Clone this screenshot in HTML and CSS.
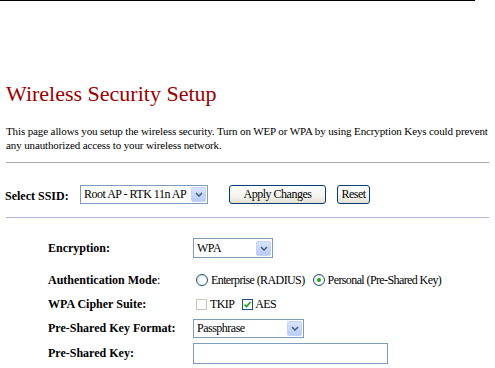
FILE: index.html
```html
<!DOCTYPE html>
<html>
<head>
<meta charset="utf-8">
<link rel="stylesheet" href="styles.css">
</head>
<body>
<div class="topline"></div>
<div class="page">
  <h1 class="title">Wireless Security Setup</h1>
  <p class="desc">This page allows you setup the wireless security. Turn on WEP or WPA by using Encryption Keys could prevent any unauthorized access to your wireless network.</p>
  <div class="rule rule-gray"></div>
  <div class="ssid-row">
    <span class="lbl ssid-lbl">Select SSID:</span>
    <div class="sel sel-ssid"><span class="sel-text">Root AP - RTK 11n AP</span><span class="sel-arrow"><svg width="8" height="5" viewBox="0 0 8 5"><path d="M1 1 L4 4 L7 1" fill="none" stroke="#4d6185" stroke-width="1.6"/></svg></span></div>
    <button class="btn btn-apply">Apply Changes</button>
    <button class="btn btn-reset">Reset</button>
  </div>
  <div class="rule rule-blue"></div>
  <div class="form">
    <div class="row row-1">
      <span class="lbl">Encryption:</span>
      <div class="sel sel-enc"><span class="sel-text">WPA</span><span class="sel-arrow"><svg width="8" height="5" viewBox="0 0 8 5"><path d="M1 1 L4 4 L7 1" fill="none" stroke="#4d6185" stroke-width="1.6"/></svg></span></div>
    </div>
    <div class="row row-2">
      <span class="lbl">Authentication Mode<span class="plain">:</span></span>
      <div class="opts">
        <span class="radio"></span><span class="opt-text">Enterprise (RADIUS)</span>
        <span class="radio radio-on"><span class="dot"></span></span><span class="opt-text">Personal (Pre-Shared Key)</span>
      </div>
    </div>
    <div class="row">
      <span class="lbl">WPA Cipher Suite:</span>
      <div class="opts">
        <span class="check check-off"></span><span class="opt-text tkip">TKIP</span>
        <span class="check check-on"><svg width="9" height="9" viewBox="0 0 9 9"><path d="M1.5 4.5 L3.5 6.5 L7.5 2" fill="none" stroke="#21a121" stroke-width="1.7"/></svg></span><span class="opt-text">AES</span>
      </div>
    </div>
    <div class="row">
      <span class="lbl">Pre-Shared Key Format:</span>
      <div class="sel sel-fmt"><span class="sel-text">Passphrase</span><span class="sel-arrow"><svg width="8" height="5" viewBox="0 0 8 5"><path d="M1 1 L4 4 L7 1" fill="none" stroke="#4d6185" stroke-width="1.6"/></svg></span></div>
    </div>
    <div class="row row-5">
      <span class="lbl">Pre-Shared Key:</span>
      <div class="textbox"></div>
    </div>
  </div>
</div>
</body>
</html>
```

FILE: styles.css
```css
html, body {
  margin: 0;
  padding: 0;
  background: #ffffff;
  font-family: "Liberation Serif", "Times New Roman", serif;
  color: #000000;
}
.topline {
  width: 475px;
  height: 1px;
  background: #000000;
}
.page {
  padding: 0 6px;
}
.title {
  margin: 80px 0 0 0;
  font-size: 22px;
  line-height: 26px;
  font-weight: normal;
  color: #990000;
}
.desc {
  margin: 17px 0 0 0;
  font-size: 11px;
  line-height: 14px;
  letter-spacing: -0.12px;
}
.rule {
  height: 0;
}
.rule-gray {
  margin-top: 10px;
  border-top: 1px solid #a8a8a8;
}
.rule-blue {
  margin-top: 13px;
  border-top: 1px solid #b4b4dc;
}
.lbl {
  font-size: 12px;
  font-weight: bold;
}
.plain {
  font-weight: normal;
}
.ssid-row {
  margin-top: 21px;
  height: 20px;
  display: flex;
  align-items: center;
}
.ssid-lbl {
  width: 75px;
  margin-left: -1px;
  padding-top: 4px;
}
.sel {
  box-sizing: border-box;
  display: flex;
  align-items: center;
  justify-content: space-between;
  border: 1px solid #7f9db9;
  background: #ffffff;
  padding-left: 3px;
  font-size: 12px;
  letter-spacing: -0.5px;
}
.sel-text {
  white-space: nowrap;
}
.sel-arrow {
  box-sizing: border-box;
  width: 15px;
  height: 15px;
  margin-right: 1px;
  border: 1px solid #c3d3fd;
  border-radius: 2px;
  background: linear-gradient(#d9e4fd, #b8cbf8);
  display: flex;
  align-items: center;
  justify-content: center;
  flex-shrink: 0;
}
.sel-ssid {
  width: 128px;
  height: 19px;
}
.btn {
  box-sizing: border-box;
  height: 19px;
  border: 1px solid #003c74;
  border-radius: 3px;
  background: linear-gradient(#ffffff, #f4f3ee 60%, #e3e0d2);
  font-family: "Liberation Serif", "Times New Roman", serif;
  font-size: 12px;
  letter-spacing: -0.5px;
  padding: 0;
  color: #000000;
}
.btn-apply {
  width: 97px;
  margin-left: 21px;
}
.btn-reset {
  width: 33px;
  margin-left: 11px;
}
.form {
  margin-top: 18px;
  padding-left: 42px;
}
.row {
  display: flex;
  align-items: center;
  height: 24px;
}
.row .lbl {
  width: 145px;
  flex-shrink: 0;
}
.row-2 {
  margin-top: 8px;
}
.row-5 {
  margin-top: 1px;
}
.sel-enc {
  width: 80px;
  height: 20px;
}
.sel-fmt {
  width: 111px;
  height: 19px;
}
.textbox {
  box-sizing: border-box;
  width: 195px;
  height: 21px;
  border: 1px solid #7f9db9;
  background: #ffffff;
}
.opts {
  display: flex;
  align-items: center;
  font-size: 12px;
  letter-spacing: -0.6px;
}
.radio {
  box-sizing: border-box;
  width: 12px;
  height: 12px;
  border-radius: 50%;
  border: 1px solid #1c5180;
  background: radial-gradient(circle at 60% 60%, #ffffff 30%, #dcdcd6 90%);
  margin-left: 3px;
  margin-right: 3px;
  display: flex;
  align-items: center;
  justify-content: center;
}
.radio-on {
  margin-left: 8px;
}
.dot {
  width: 4px;
  height: 4px;
  border-radius: 50%;
  background: #21a121;
}
.check {
  box-sizing: border-box;
  width: 11px;
  height: 11px;
  margin-left: 3px;
  margin-right: 3px;
  display: flex;
  align-items: center;
  justify-content: center;
  background: #ffffff;
}
.check-off {
  border: 1px solid #cac8bb;
}
.check-on {
  border: 1px solid #1c5180;
  margin-left: 8px;
  margin-right: 2px;
}
.opt-text {
  white-space: nowrap;
}
```
